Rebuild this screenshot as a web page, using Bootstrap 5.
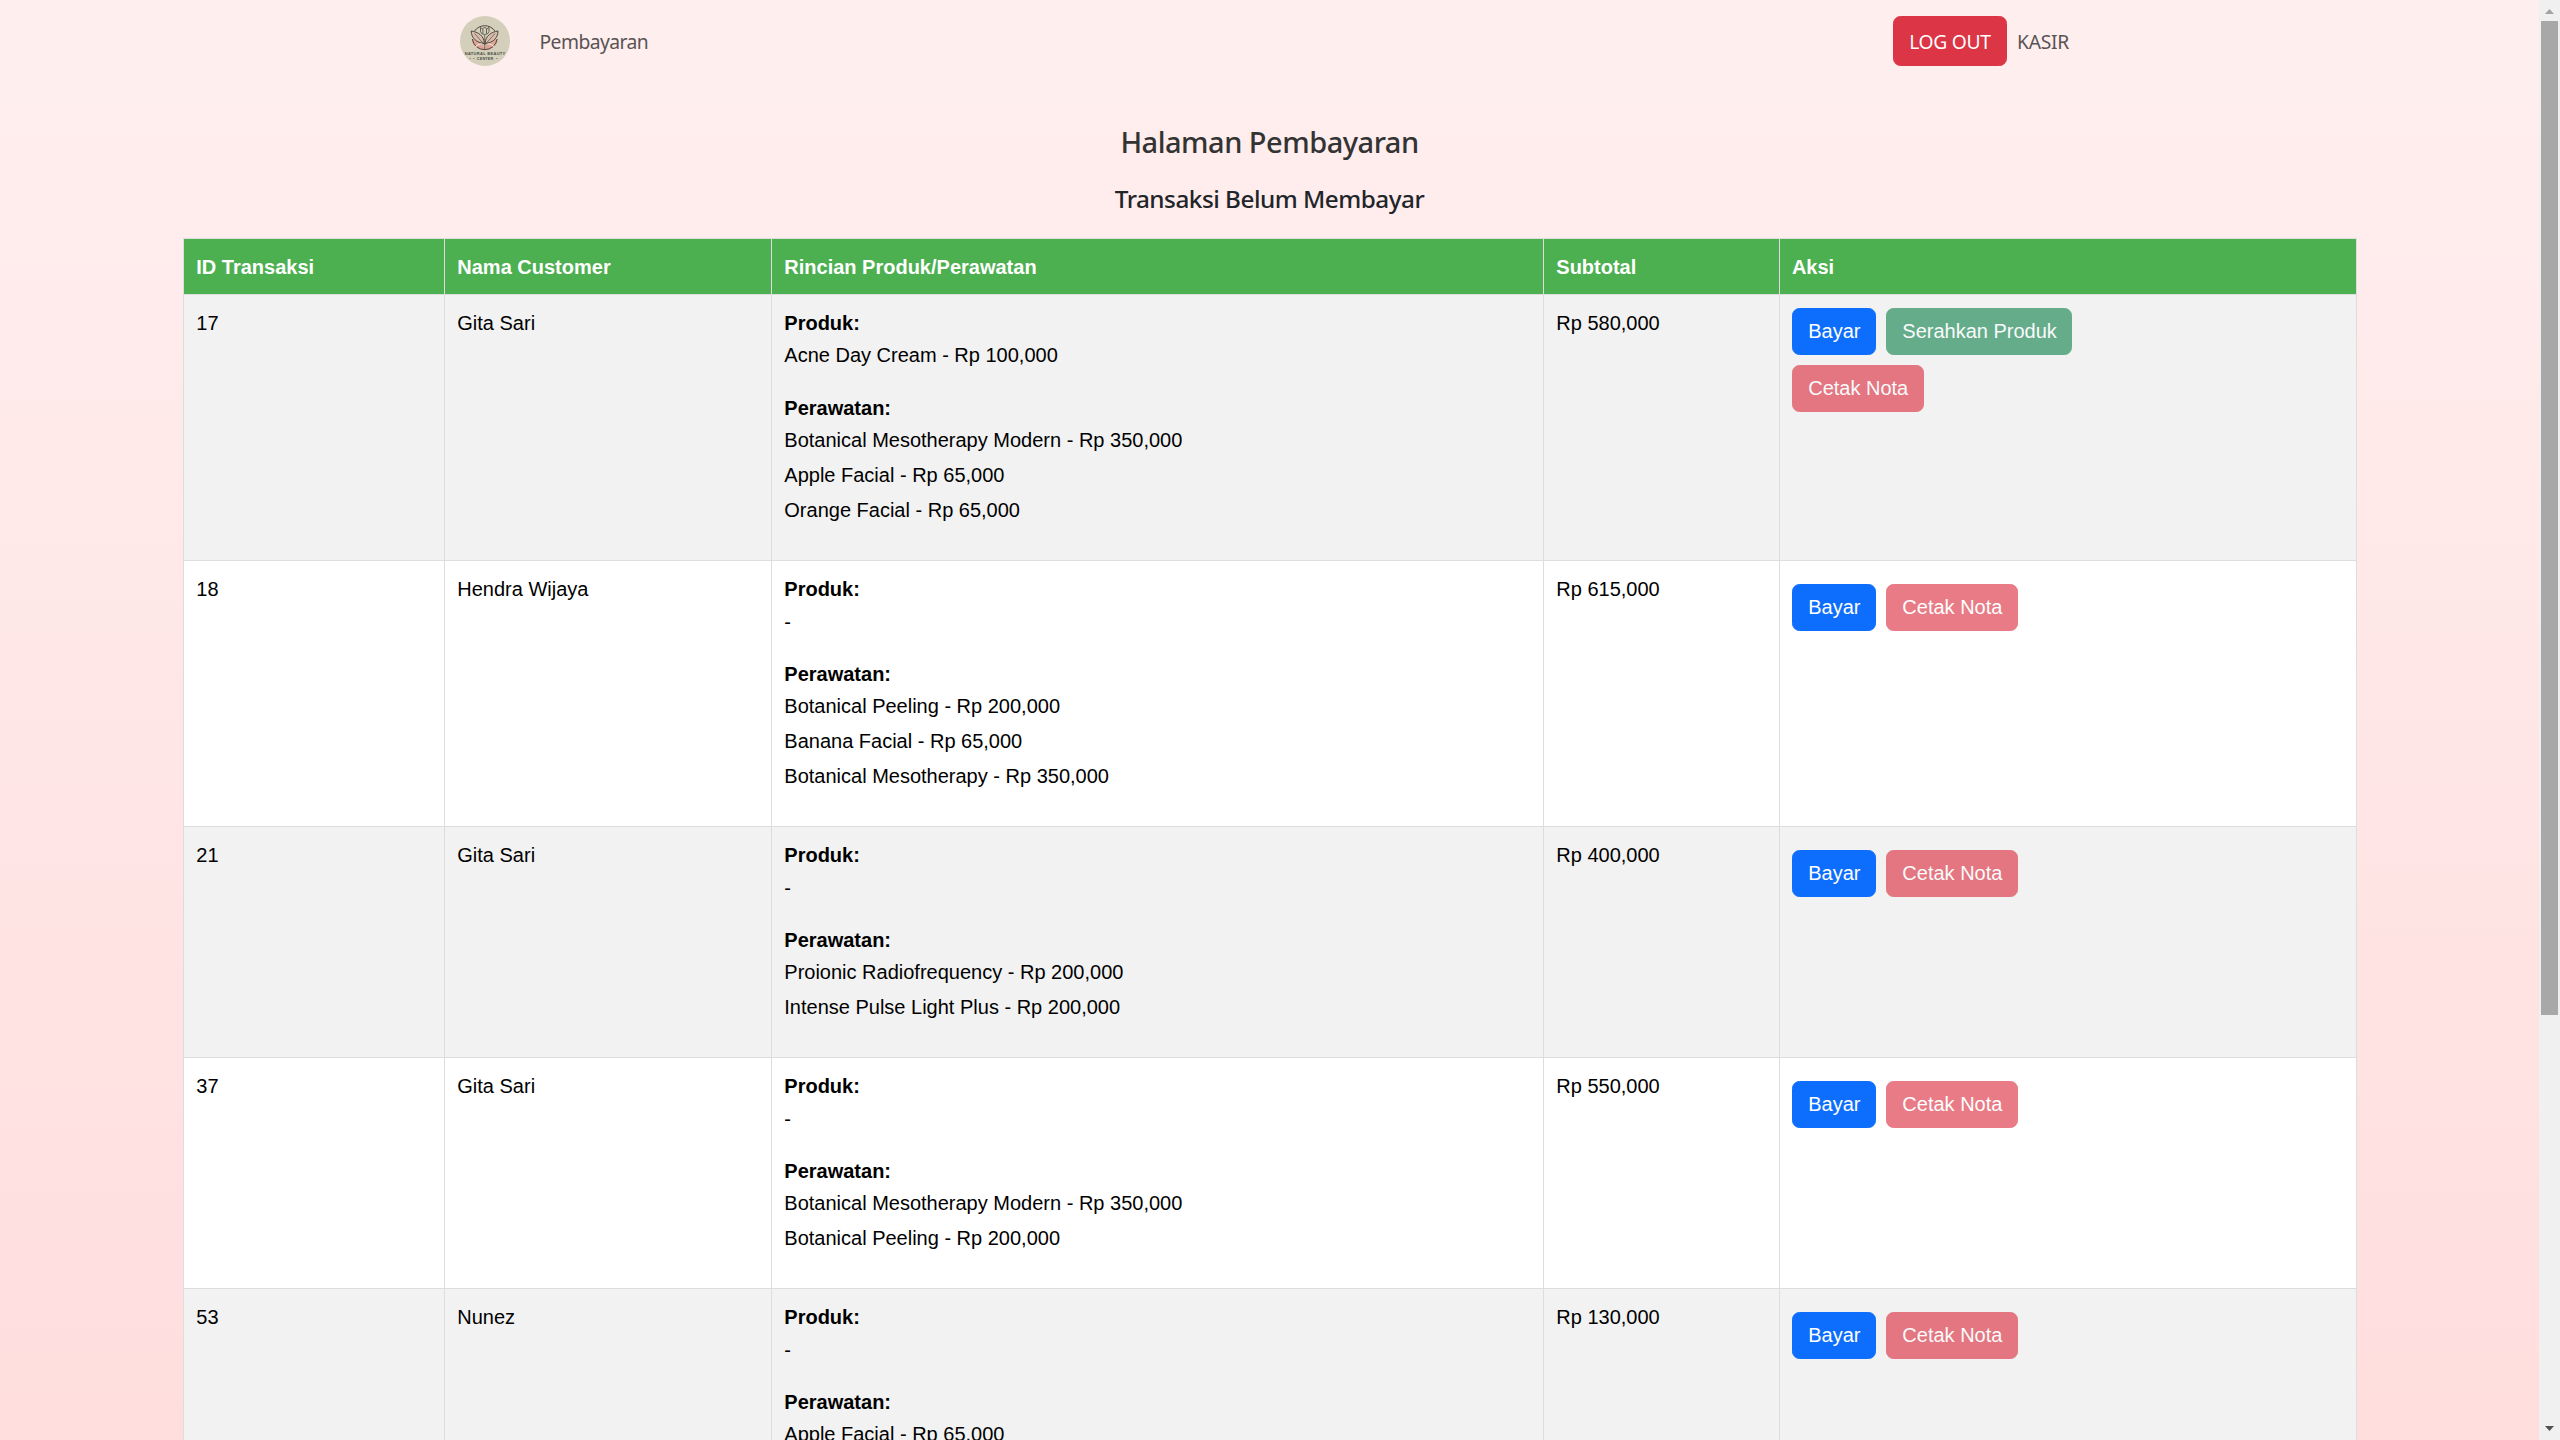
<!DOCTYPE html>
<html lang="id">
<head>
<meta charset="utf-8">
<title>Halaman Pembayaran</title>
<link href="https://cdn.jsdelivr.net/npm/bootstrap@5.3.0/dist/css/bootstrap.min.css" rel="stylesheet">
<style>
html{font-size:20px}
body{font-family:"Noto Sans","Open Sans",sans-serif;height:1440px;overflow:hidden;background:#f0f0f0}
.page{background:linear-gradient(#ffefef,#ffd6d6 2025px);height:1440px;overflow:hidden}
.topbar{height:82px;padding:0;background:#ffeeee}
.topbar .container{max-width:1650px;padding:0 15px}
.logo{width:50px;height:50px}
.topbar .nav-link{padding:11px 10px 9px;color:#595353;font-size:19.3px;letter-spacing:-.55px}
.topbar .role-link{width:72.5px;padding-right:0;letter-spacing:-.3px;white-space:nowrap}
.topbar .btn{height:50px;width:114px;padding:2px 0 0;border-radius:7.5px;font-size:19.3px;letter-spacing:-.3px}
.title1{font-size:29px;line-height:36px;font-weight:500;color:#333;margin:42px 0 20px;letter-spacing:-.5px}
.title2{font-size:24.3px;line-height:30px;font-weight:500;margin:0 0 24px;padding-top:4px;letter-spacing:-.5px}
.trx{width:2174px;margin:0 auto;table-layout:fixed;border-collapse:collapse;font-family:"Liberation Sans",Arial,sans-serif;font-size:20px;line-height:30px;color:#000}
.trx th,.trx td{border:1px solid #ddd;padding:12.5px 12px 12.5px 12.8px;vertical-align:top;text-align:left}
.trx th:last-child,.trx td:last-child{padding-left:12.4px}
.trx th{background:#4caf50;color:#fff}
.trx td{background:#fff}
.trx tbody tr:nth-child(odd) td{background:#f2f2f2}
.trx ul{margin:0 0 20px}
.trx li{padding:2px 0 3px}
.trx li.none{padding:3px 0 2px}
.trx .btn{padding:7.5px 14.600px 7.5px 15.300px;border-radius:7.5px;line-height:30px}
.acts{gap:10px;max-width:300px}
tr:not(:first-child) .acts{padding-top:10px}
.sbar{width:21px;height:1440px;background:#f0f0f0}
.thumb{width:17px;height:994px;background:#a8a8a8}
.arr{height:21px}
</style>
</head>
<body>
<div class="d-flex">
<main class="page flex-fill">
<nav class="navbar topbar">
<div class="container d-flex flex-nowrap">
<div class="d-flex align-items-center">
<svg class="logo" viewBox="0 0 50 50">
<circle cx="25" cy="25" r="25" fill="#d3cfba"/>
<path d="M12 23C17 23 22 26 24.500 32C27 26 32 23 37.500 23C38 29 33 34 24.700 34C16.500 34 11.500 29 12 23Z" fill="#dfa596"/>
<g fill="none" stroke="#4d4840" stroke-width="1">
<path d="M14.500 15A12.600 12.600 0 0 1 35 15M12.300 23A12.600 12.600 0 0 0 37.200 23"/>
<path d="M11.200 15C18 16 24 19.500 24.300 27.500C16 26.500 11.500 22 11.200 15ZM38 15C31.500 16 25.500 19.500 25.100 27.500C33.500 26.500 37.800 22 38 15Z" fill="#d9bfab"/>
<path d="M24.700 34V19M14.500 17.500L24.700 29L35 17.500" stroke-width=".7"/>
<path d="M20.500 11.500L22.700 13L24.700 11L26.700 13L29 11.500V15.500Q28.300 18.500 24.700 18.500Q21 18.500 20.500 15.500ZM22.900 13V17.500M26.500 13V17.500" stroke-width=".8"/>
</g>
<path d="M15.500 31Q17.500 27.500 22 28M34 31Q32 27.500 27.500 28" fill="none" stroke="#eedfd2" stroke-width="1.100"/>
<g font-family="Liberation Sans, sans-serif" font-weight="700" fill="#4a4f4a" text-anchor="middle">
<text x="25" y="39" font-size="4" textLength="40.500" lengthAdjust="spacing">NATURAL BEAUTY</text>
<text x="25" y="44" font-size="3.800" textLength="16.500" lengthAdjust="spacing">CENTER</text></g>
<path d="M9.500 42.500h1.500M13 42.500h1.500M36 42.500h1.500" stroke="#7d7a6d" stroke-width=".8"/>
</svg>
<a class="nav-link ms-3" href="#">Pembayaran</a>
</div>
<div class="d-flex align-items-center">
<button class="btn btn-danger">LOG OUT</button>
<a class="nav-link role-link" href="#">KASIR</a>
</div>
</div>
</nav>
<h2 class="title1 text-center">Halaman Pembayaran</h2>
<h3 class="title2 text-center">Transaksi Belum Membayar</h3>
<table class="trx">
<colgroup><col style="width:261px"><col style="width:327px"><col style="width:772px"><col style="width:236px"><col></colgroup>
<thead><tr><th>ID Transaksi</th><th>Nama Customer</th><th>Rincian Produk/Perawatan</th><th>Subtotal</th><th>Aksi</th></tr></thead>
<tbody>
<tr><td>17</td><td>Gita Sari</td><td><strong>Produk:</strong><ul class="list-unstyled"><li>Acne Day Cream - Rp 100,000</li></ul><strong>Perawatan:</strong><ul class="list-unstyled"><li>Botanical Mesotherapy Modern - Rp 350,000</li><li>Apple Facial - Rp 65,000</li><li>Orange Facial - Rp 65,000</li></ul></td><td>Rp 580,000</td><td><div class="acts d-flex flex-wrap"><button class="btn btn-primary">Bayar</button><button class="btn btn-success" disabled>Serahkan Produk</button><button class="btn btn-danger" disabled>Cetak Nota</button></div></td></tr>
<tr><td>18</td><td>Hendra Wijaya</td><td><strong>Produk:</strong><ul class="list-unstyled"><li class="none">-</li></ul><strong>Perawatan:</strong><ul class="list-unstyled"><li>Botanical Peeling - Rp 200,000</li><li>Banana Facial - Rp 65,000</li><li>Botanical Mesotherapy - Rp 350,000</li></ul></td><td>Rp 615,000</td><td><div class="acts d-flex flex-wrap"><button class="btn btn-primary">Bayar</button><button class="btn btn-danger" disabled>Cetak Nota</button></div></td></tr>
<tr><td>21</td><td>Gita Sari</td><td><strong>Produk:</strong><ul class="list-unstyled"><li class="none">-</li></ul><strong>Perawatan:</strong><ul class="list-unstyled"><li>Proionic Radiofrequency - Rp 200,000</li><li>Intense Pulse Light Plus - Rp 200,000</li></ul></td><td>Rp 400,000</td><td><div class="acts d-flex flex-wrap"><button class="btn btn-primary">Bayar</button><button class="btn btn-danger" disabled>Cetak Nota</button></div></td></tr>
<tr><td>37</td><td>Gita Sari</td><td><strong>Produk:</strong><ul class="list-unstyled"><li class="none">-</li></ul><strong>Perawatan:</strong><ul class="list-unstyled"><li>Botanical Mesotherapy Modern - Rp 350,000</li><li>Botanical Peeling - Rp 200,000</li></ul></td><td>Rp 550,000</td><td><div class="acts d-flex flex-wrap"><button class="btn btn-primary">Bayar</button><button class="btn btn-danger" disabled>Cetak Nota</button></div></td></tr>
<tr><td>53</td><td>Nunez</td><td><strong>Produk:</strong><ul class="list-unstyled"><li class="none">-</li></ul><strong>Perawatan:</strong><ul class="list-unstyled"><li>Apple Facial - Rp 65,000</li></ul></td><td>Rp 130,000</td><td><div class="acts d-flex flex-wrap"><button class="btn btn-primary">Bayar</button><button class="btn btn-danger" disabled>Cetak Nota</button></div></td></tr>
</tbody>
</table>
</main>
<div class="sbar flex-shrink-0 d-flex flex-column align-items-center">
<svg class="arr" width="21" viewBox="0 0 21 21"><path d="M6 14L10.500 9L15 14Z" fill="#a3a3a3"/></svg>
<div class="thumb"></div>
<svg class="arr mt-auto" width="21" viewBox="0 0 21 21"><path d="M6 7L10.500 12L15 7Z" fill="#505050"/></svg>
</div>
</div>
<script src="https://cdn.jsdelivr.net/npm/bootstrap@5.3.0/dist/js/bootstrap.bundle.min.js"></script>
</body>
</html>
